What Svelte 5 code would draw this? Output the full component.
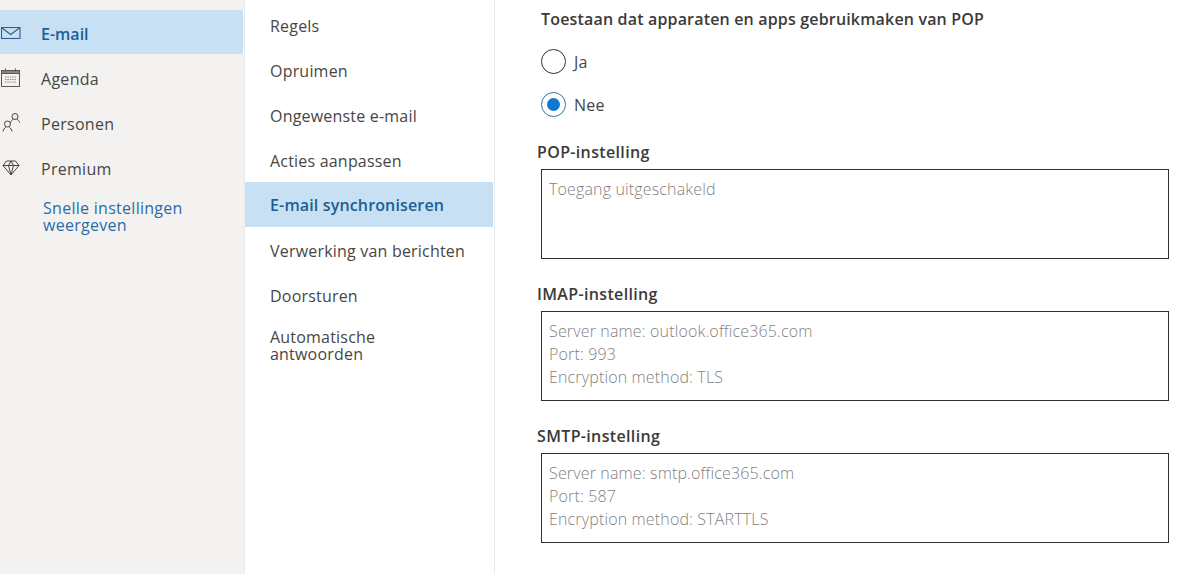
<script>
  const mainNav = [
    { label: 'E-mail', icon: 'mail', active: true },
    { label: 'Agenda', icon: 'cal' },
    { label: 'Personen', icon: 'people' },
    { label: 'Premium', icon: 'gem' }
  ];
  const subNav = ['Regels', 'Opruimen', 'Ongewenste e-mail', 'Acties aanpassen', 'E-mail synchroniseren', 'Verwerking van berichten', 'Doorsturen'];
  const boxes = [
    { title: 'POP-instelling', lines: ['Toegang uitgeschakeld'] },
    { title: 'IMAP-instelling', lines: ['Server name: outlook.office365.com', 'Port: 993', 'Encryption method: TLS'] },
    { title: 'SMTP-instelling', lines: ['Server name: smtp.office365.com', 'Port: 587', 'Encryption method: STARTTLS'] }
  ];
</script>

<div class="page">
  <nav class="side">
    {#each mainNav as item}
      <div class="side-item" class:active={item.active}>
        <span class="icon">
          {#if item.icon === 'mail'}
            <svg width="20" height="12" viewBox="0 0 20 12" fill="none" stroke="#2f5f8a" stroke-width="1.1"><rect x="0.5" y="0.5" width="18.5" height="11"/><path d="M1 1l8.700 6.500L18.500 1"/></svg>
          {:else if item.icon === 'cal'}
            <svg width="21" height="20" viewBox="0 0 21 20" fill="none" stroke="#5a5958" stroke-width="1"><rect x="1.500" y="2.500" width="18" height="16"/><rect x="1.500" y="2.500" width="18" height="3" fill="#8a8886"/><path d="M5.500 0.500v3M15.500 0.500v3"/><path d="M5 9h11M5 11.500h11M5 14h11" stroke="#8a8886" stroke-dasharray="1.400 1"/></svg>
          {:else if item.icon === 'people'}
            <svg width="18" height="20" viewBox="0 0 18 20" fill="none" stroke="#484644" stroke-width="1"><circle cx="13" cy="3.500" r="3"/><path d="M8.500 9.500c.4-1.400 1.400-2.500 2.700-3.200M15 6.300c1.300.7 2.200 1.800 2.500 3.200"/><circle cx="5.500" cy="11" r="3"/><path d="M1 18.500c.4-2 1.500-3.500 2.800-4.300M7.300 14.200c1.300.8 2.300 2.300 2.700 4.300"/></svg>
          {:else}
            <svg width="18" height="16" viewBox="0 0 18 16" fill="none" stroke="#484644" stroke-width="1"><path d="M4.500 1h9L17 5.500 9 15 1 5.500z"/><path d="M1 5.500h16M6.500 5.500L9 15l2.500-9.500M6.500 5.500L9 1l2.500 4.500"/></svg>
          {/if}
        </span>
        <span class="side-label">{item.label}</span>
      </div>
    {/each}
    <div class="quick">Snelle instellingen<br />weergeven</div>
  </nav>

  <nav class="sub">
    {#each subNav as item}
      <div class="sub-item" class:active={item === 'E-mail synchroniseren'}>{item}</div>
    {/each}
    <div class="sub-multi">Automatische<br />antwoorden</div>
  </nav>

  <main class="main">
    <div class="question">Toestaan dat apparaten en apps gebruikmaken van POP</div>
    <div class="radio-row">
      <span class="radio"></span>
      <span>Ja</span>
    </div>
    <div class="radio-row">
      <span class="radio on"><span class="dot"></span></span>
      <span>Nee</span>
    </div>
    {#each boxes as box}
      <section class="group">
        <h2>{box.title}</h2>
        <div class="box">
          {#each box.lines as line}
            <div>{line}</div>
          {/each}
        </div>
      </section>
    {/each}
  </main>
</div>

<style>
  :global(body) {
    margin: 0;
    background: #fff;
    font-family: "Open Sans", "Noto Sans", sans-serif;
    color: #323130;
  }
  .page {
    display: flex;
    width: 1192px;
    height: 574px;
    overflow: hidden;
  }
  .side {
    box-sizing: border-box;
    width: 245px;
    padding: 10px 1px 0 0;
    background: #f3f2f1;
    border-right: 1px solid #eaeaea;
    flex: none;
  }
  .side-item {
    display: flex;
    align-items: center;
    height: 44px;
    margin-bottom: 1px;
    font-size: 16px;
    letter-spacing: 0.28px;
    color: #484644;
    border-radius: 0 2px 2px 0;
  }
  .side-label { padding-top: 3px; }
  .side-item.active {
    background: #c7e0f4;
    color: #1b5e93;
    font-weight: 600;
    letter-spacing: 0;
  }
  .icon {
    display: flex;
    align-items: center;
    justify-content: center;
    width: 21px;
    margin-right: 20px;
    padding-top: 1px;
    flex: none;
  }
  .quick {
    margin: 11px 0 0 43px;
    font-size: 16px;
    line-height: 17px;
    letter-spacing: 0.28px;
    color: #2b6ca3;
  }
  .sub {
    box-sizing: border-box;
    width: 250px;
    padding: 2px 0 0 0;
    border-right: 1px solid #eaeaea;
    flex: none;
  }
  .sub-item {
    box-sizing: border-box;
    display: flex;
    align-items: center;
    height: 45px;
    padding: 2px 0 0 25px;
    font-size: 16px;
    letter-spacing: 0.2px;
    color: #484644;
  }
  .sub-item.active {
    margin-right: 1px;
    padding-top: 0;
    background: #c7e0f4;
    color: #1b5e93;
    font-weight: 600;
    letter-spacing: 0.15px;
  }
  .sub-multi {
    padding: 12px 0 0 25px;
    font-size: 16px;
    line-height: 17px;
    letter-spacing: 0.2px;
    color: #484644;
  }
  .main {
    padding: 8px 0 0 42px;
    width: 670px;
    box-sizing: border-box;
  }
  .question {
    padding-left: 4px;
    height: 32px;
    line-height: 22px;
    font-size: 16px;
    font-weight: 600;
    letter-spacing: 0.17px;
    color: #3b3a39;
  }
  .radio-row {
    display: flex;
    align-items: center;
    height: 43px;
    padding-left: 4px;
    font-size: 16px;
    letter-spacing: 0.2px;
    color: #484644;
  }
  .radio {
    box-sizing: border-box;
    display: flex;
    align-items: center;
    justify-content: center;
    width: 25px;
    height: 25px;
    margin-right: 8px;
    border: 1px solid #323130;
    border-radius: 50%;
  }
  .radio.on { border-color: #2a7a9e; }
  .dot {
    width: 13px;
    height: 13px;
    border-radius: 50%;
    background: #0f78d4;
  }
  .group h2 {
    margin: 0;
    height: 32px;
    line-height: 30px;
    font-size: 16px;
    font-weight: 600;
    letter-spacing: 0.35px;
    color: #3b3a39;
  }
  .group { height: 142px; }
  .group:first-of-type { margin-top: 11px; }
  .box {
    box-sizing: border-box;
    margin-left: 4px;
    width: 628px;
    height: 90px;
    padding: 8px 7px;
    border: 1px solid #323130;
    font-size: 16px;
    line-height: 23px;
    font-weight: 300;
    letter-spacing: 0.15px;
    color: #7f7f7f;
  }
</style>
